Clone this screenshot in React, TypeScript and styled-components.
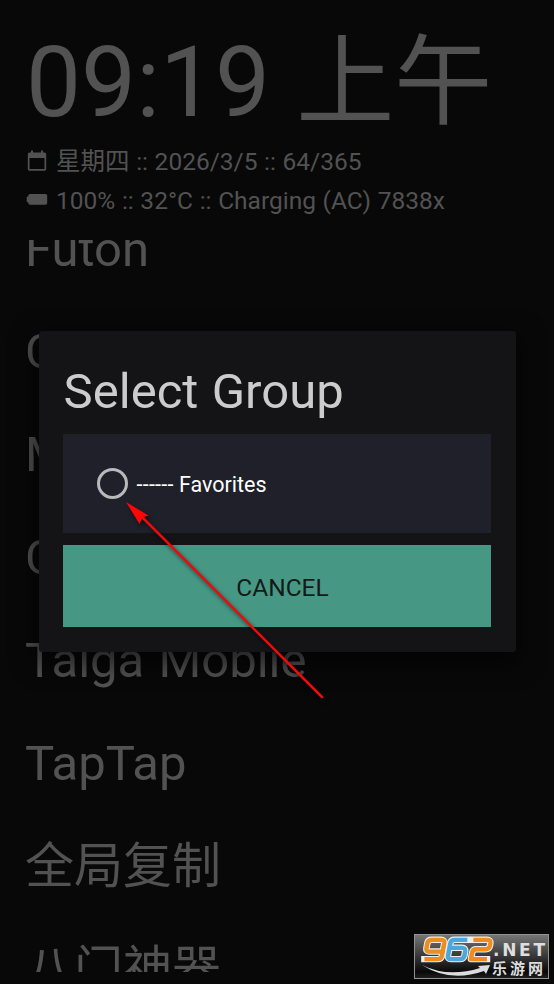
import React from "react";
import styled, { createGlobalStyle } from "styled-components";

const Global = createGlobalStyle`
  html, body { margin: 0; padding: 0; background: #080808; overflow: hidden; }
  * { box-sizing: border-box; }
`;

const Screen = styled.main`
  position: relative;
  display: flex;
  flex-direction: column;
  width: 554px;
  height: 984px;
  padding-top: 26px;
  overflow: hidden;
  background: #080808;
  color: #525252;
  font-family: Roboto, "Noto Sans CJK SC", sans-serif;
  font-size: 49px;
  white-space: pre;
`;

const Clock = styled.div`
  padding-left: 26px;
  font-size: 98px;
  line-height: 114px;
  height: 116px;
  word-spacing: 2px;
`;

const InfoRow = styled.div`
  display: flex;
  align-items: center;
  height: 39px;
  padding-left: 26px;
  gap: 8px;
  font-size: 24.5px;
  line-height: 39px;
  word-spacing: 0.55px;
`;

const InfoIcon = styled.svg`
  width: 22px;
  height: 26px;
  margin-bottom: 2px;
  fill: currentColor;
`;

const AppList = styled.ul`
  display: flex;
  flex-direction: column;
  height: 732px;
  margin: 20px 0 0;
  padding: 0 0 0 25px;
  overflow: hidden;
  list-style: none;
`;

const AppItem = styled.li`
  flex: none;
  height: 103px;
  line-height: 103px;
  word-spacing: 2px;

  &:first-child {
    margin-top: -42px;
    height: 102px;
  }
`;

const Overlay = styled.div`
  position: absolute;
  inset: 0;
  display: flex;
  justify-content: center;
  align-items: center;
`;

const Dialog = styled.section`
  display: flex;
  flex-direction: column;
  width: 477px;
  height: 321px;
  margin-bottom: 1px;
  padding: 25px 25px 24px 24px;
  border-radius: 3px;
  background: #141416;
  box-shadow: 0 8px 24px 4px rgba(0, 0, 0, 0.6);
`;

const Title = styled.h1`
  margin: 0;
  height: 78px;
  padding-left: 1px;
  color: #cccccc;
  font-size: 49px;
  font-weight: 400;
  line-height: 71px;
  letter-spacing: 0.05px;
  word-spacing: 1px;
`;

const Option = styled.label`
  display: flex;
  align-items: center;
  height: 99px;
  padding-left: 34px;
  gap: 9px;
  background: #20202a;
  color: #ffffff;
  font-size: 21.5px;
`;

const Radio = styled.span`
  width: 31px;
  height: 31px;
  border: 3px solid #b9b9bb;
  border-radius: 50%;
`;

const OptionText = styled.span`
  line-height: 30px;
  padding-top: 3px;
`;

const Dashes = styled.span`
  letter-spacing: 0.25px;
`;

const Cancel = styled.button`
  height: 82px;
  margin-top: 12px;
  padding: 2px 0 0 12px;
  border: 0;
  background: #469884;
  color: #161819;
  font-family: inherit;
  font-size: 24.5px;
`;

const Arrow = styled.svg`
  position: absolute;
  left: 110px;
  top: 490px;
  width: 225px;
  height: 220px;
  filter: drop-shadow(2px 3px 2px rgba(0, 0, 0, 0.6));
`;

const Badge = styled.svg`
  position: absolute;
  left: 414px;
  top: 934px;
  width: 135px;
  height: 45px;
`;

const apps = ["Futon", "C", "M", "C", "Taiga Mobile", "TapTap", "全局复制", "八门神器"];

const digits = [
  { id: "nine", color: "#ed8d20", x: 9, d: "M19 15.500H6.500Q3 15.500 3.500 12L4.500 6.500Q5.200 3 9 3H18.500Q22.500 3 22 6.500L19.500 20Q18.800 23.500 15 23.500H1.500" },
  { id: "six", color: "#4ba8df", x: 32, d: "M22 3H9Q5.200 3 4.500 6.500L2 20Q1.500 23.500 5 23.500H14.500Q18.200 23.500 19 20L19.800 15Q20.200 11.500 16.500 11.500H4" },
  { id: "two", color: "#ed8d20", x: 55, d: "M4.500 3H18.500Q22.500 3 22 6.500L21.500 9.500Q20.800 13 17 13H7.500Q4 13 3.300 16.500L2 23.500H18.500" },
];

export default function App() {
  return (
    <Screen>
      <Global />
      <Clock>09:19 上午</Clock>
      <InfoRow>
        <InfoIcon viewBox="0 0 22 26">
          <path
            fillRule="evenodd"
            d="M5 2.500h2v2h8v-2h2v2h1.500a1.700 1.700 0 0 1 1.700 1.700v14.800a1.700 1.700 0 0 1-1.700 1.700h-15a1.700 1.700 0 0 1-1.700-1.700v-14.800a1.700 1.700 0 0 1 1.700-1.700h1.500zM3.500 10v11h15v-11z"
          />
        </InfoIcon>
        <span>星期四 :: 2026/3/5 :: 64/365</span>
      </InfoRow>
      <InfoRow>
        <InfoIcon viewBox="0 0 22 26">
          <path d="M4 7h15.500a1.700 1.700 0 0 1 1.700 1.700v7.300a1.700 1.700 0 0 1-1.700 1.700h-15.500a1.700 1.700 0 0 1-1.700-1.700v-.7h-.8a.8.8 0 0 1-.8-.8v-4.300a.8.8 0 0 1 .8-.8h.8v-.7a1.700 1.700 0 0 1 1.700-1.700z" />
        </InfoIcon>
        <span>100% :: 32°C :: Charging (AC) 7838x</span>
      </InfoRow>
      <AppList>
        {apps.map((name, i) => (
          <AppItem key={i}>{name}</AppItem>
        ))}
      </AppList>
      <Overlay>
        <Dialog role="dialog">
          <Title>Select Group</Title>
          <Option>
            <Radio />
            <OptionText>
              <Dashes>------</Dashes> Favorites
            </OptionText>
          </Option>
          <Cancel>CANCEL</Cancel>
        </Dialog>
      </Overlay>
      <Arrow viewBox="110 490 225 220">
        <path d="M140 515L322 697" stroke="#e80c0c" strokeWidth="2.600" strokeLinecap="round" />
        <path d="M126 502L148.500 515.500L142.500 517.500L139.500 524Z" fill="#ff0505" />
      </Arrow>
      <Badge viewBox="0 0 135 45">
        <defs>
          <linearGradient id="plate" x1="0" y1="0" x2="0" y2="1">
            <stop offset="0" stopColor="#777" />
            <stop offset="0.550" stopColor="#303030" />
            <stop offset="0.850" stopColor="#090909" />
            <stop offset="1" stopColor="#202020" />
          </linearGradient>
        </defs>
        <rect x="0.500" y="0.500" width="134" height="44" fill="url(#plate)" stroke="#929292" />
        <g fill="none" strokeLinejoin="round">
          {digits.map(({ id, color, x, d }) => (
            <g key={id} transform={`translate(${x} 3) scale(0.970 0.940)`}>
              <path d={d} stroke="#eeeeee" strokeWidth="6.800" strokeLinecap="square" />
              <path d={d} stroke={color} strokeWidth="4.600" />
            </g>
          ))}
        </g>
        <path d="M8 31Q34 44 66 34L64 32L76 31L72 40L70 37Q36 49 8 31Z" fill="#dddddd" />
        <text
          x="79"
          y="22"
          fill="#dedede"
          fontFamily="DejaVu Sans, sans-serif"
          fontWeight="700"
          fontSize="17"
          textLength="52"
          lengthAdjust="spacing"
        >
          .NET
        </text>
        <text
          x="78"
          y="40"
          fill="#dedede"
          fontFamily="Noto Sans CJK SC, sans-serif"
          fontWeight="700"
          fontSize="15"
          textLength="51"
          lengthAdjust="spacing"
        >
          乐游网
        </text>
      </Badge>
    </Screen>
  );
}
